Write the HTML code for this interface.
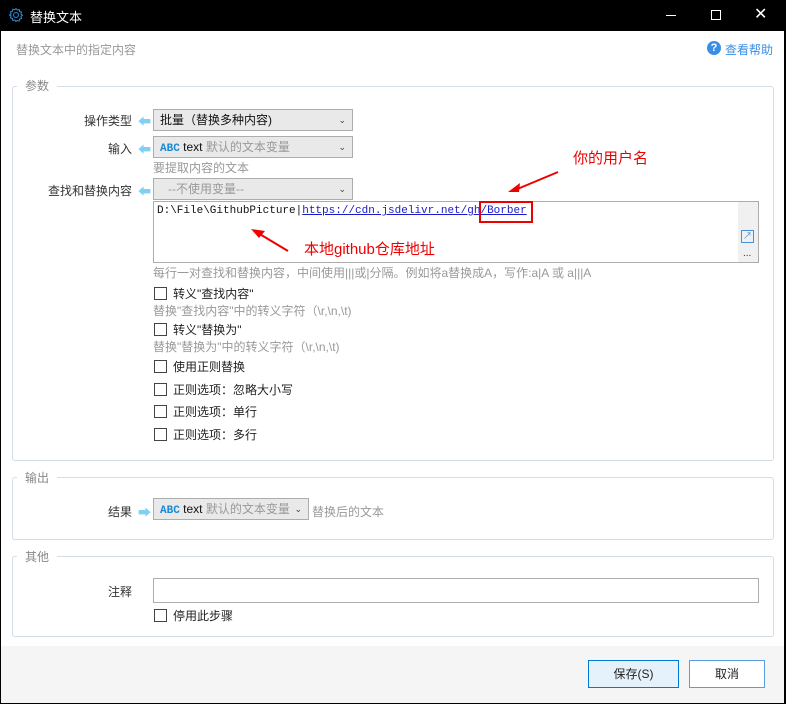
<!DOCTYPE html><html><head><meta charset="utf-8"><style>
*{box-sizing:border-box;margin:0;padding:0}
body{width:786px;height:704px;position:relative;overflow:hidden;background:#000;font-family:"Liberation Sans","Noto Sans CJK SC",sans-serif;font-size:12px;color:#333}
.a{position:absolute}
.win{position:absolute;left:1px;top:31px;width:783px;height:672px;background:#fff}
.foot{position:absolute;left:1px;top:646px;width:783px;height:57px;background:#f5f5f5}
.grp{position:absolute;border:1px solid #d5dde6;border-radius:3px}
.gt{position:absolute;background:#fff;padding:0 8px;color:#888;font-size:12px}
.lbl{position:absolute;text-align:right;width:120px;color:#333}
.arr{position:absolute;color:#7fd0f5;font-size:13px}
.sel{position:absolute;height:22px;background:#e9e9e9;border:1px solid #adadad;line-height:20px;padding-left:6px}
.sel .c{position:absolute;right:6px;top:0;font-size:9px;color:#444}
.abc{color:#1a8ad4;font-family:"Liberation Mono",monospace;font-weight:bold;font-size:11px}
.hint{position:absolute;color:#999}
.cb{position:absolute;width:13px;height:13px;border:1px solid #444;background:#fff}
.ct{position:absolute;color:#222}
.btn{position:absolute;height:28px;border:1px solid #5a9de0;background:#fff;text-align:center;line-height:26px;color:#222}
</style></head><body>
<svg class="a" style="left:8px;top:7px" width="16" height="16" viewBox="0 0 16 16"><circle cx="8" cy="8" r="2.5" fill="none" stroke="#2a8fd8"/><path d="M8 1.5l1.2 1.6 2-.6.3 2 2 .6-.6 2 1.6 1.2-1.6 1.2.6 2-2 .6-.3 2-2-.6L8 14.5l-1.2-1.6-2 .6-.3-2-2-.6.6-2L1.5 8l1.6-1.2-.6-2 2-.6.3-2 2 .6z" fill="none" stroke="#2a8fd8"/></svg>
<div class="a" style="left:30px;top:7px;color:#fff;font-size:13px">替换文本</div>
<div class="a" style="left:666px;top:15px;width:10px;height:1px;background:#fff"></div>
<div class="a" style="left:711px;top:10px;width:10px;height:10px;border:1px solid #fff"></div>
<div class="a" style="left:754px;top:4px;color:#fff;font-size:16px">✕</div>
<div class="win"></div><div class="foot"></div>
<div class="a" style="left:16px;top:41px;color:#999">替换文本中的指定内容</div>
<div class="a" style="left:707px;top:41px;width:14px;height:14px;border-radius:50%;background:#3a8ee6;color:#fff;font-weight:bold;font-size:11px;text-align:center;line-height:14px">?</div>
<div class="a" style="left:725px;top:41px;color:#3a8ee6">查看帮助</div>

<div class="grp" style="left:12px;top:86px;width:762px;height:375px"></div><div class="gt" style="left:17px;top:77px">参数</div>
<div class="lbl" style="left:12px;top:112px">操作类型</div><div class="arr" style="left:138px;top:111px">⬅</div>
<div class="sel" style="left:153px;top:109px;width:200px;color:#111">批量（替换多种内容)<span class="c">⌄</span></div>
<div class="lbl" style="left:12px;top:140px">输入</div><div class="arr" style="left:138px;top:139px">⬅</div>
<div class="sel" style="left:153px;top:136px;width:200px"><span class="abc">ABC</span> <span style="color:#111">text</span> <span style="color:#999">默认的文本变量</span><span class="c">⌄</span></div>
<div class="hint" style="left:153px;top:159px">要提取内容的文本</div>
<div class="lbl" style="left:12px;top:182px">查找和替换内容</div><div class="arr" style="left:138px;top:181px">⬅</div>
<div class="sel" style="left:153px;top:178px;width:200px;color:#999;padding-left:14px">--不使用变量--<span class="c">⌄</span></div>
<div class="a" style="left:153px;top:201px;width:606px;height:62px;border:1px solid #adadad;background:#fff"></div>
<div class="a" style="left:738px;top:202px;width:20px;height:60px;background:#f0f0f0"></div>
<div class="a" style="left:741px;top:230px;width:13px;height:13px;border:1px solid #4a90d9;color:#4a90d9;font-size:9px;line-height:11px;text-align:center">↗</div>
<div class="a" style="left:743px;top:248px;font-size:10px">...</div>
<div class="a" style="left:157px;top:205px;font-family:'Liberation Mono',monospace;font-size:11px;color:#111">D:\File\GithubPicture|<span style="color:#1a1acc;text-decoration:underline">https://cdn.jsdelivr.net/gh/Borber</span></div>
<div class="a" style="left:479px;top:201px;width:54px;height:22px;border:2px solid #e00"></div>
<svg class="a" style="left:240px;top:170px" width="330" height="90"><line x1="318" y1="2" x2="275" y2="20" stroke="#e00" stroke-width="2"/><path d="M268 22l12-9-1 9z" fill="#e00"/><line x1="48" y1="81" x2="18" y2="63" stroke="#e00" stroke-width="2"/><path d="M11 59l14 2-6 7z" fill="#e00"/></svg>
<div class="a" style="left:573px;top:147px;color:#e00;font-size:15px">你的用户名</div>
<div class="a" style="left:304px;top:238px;color:#e00;font-size:15px">本地github仓库地址</div>
<div class="hint" style="left:153px;top:264px">每行一对查找和替换内容，中间使用|||或|分隔。例如将a替换成A，写作:a|A 或 a|||A</div>
<div class="cb" style="left:154px;top:287px"></div><div class="ct" style="left:173px;top:285px">转义"查找内容"</div>
<div class="hint" style="left:153px;top:302px">替换"查找内容"中的转义字符（\r,\n,\t)</div>
<div class="cb" style="left:154px;top:323px"></div><div class="ct" style="left:173px;top:321px">转义"替换为"</div>
<div class="hint" style="left:153px;top:338px">替换"替换为"中的转义字符（\r,\n,\t)</div>
<div class="cb" style="left:154px;top:360px"></div><div class="ct" style="left:173px;top:358px">使用正则替换</div>
<div class="cb" style="left:154px;top:383px"></div><div class="ct" style="left:173px;top:381px">正则选项：忽略大小写</div>
<div class="cb" style="left:154px;top:405px"></div><div class="ct" style="left:173px;top:403px">正则选项：单行</div>
<div class="cb" style="left:154px;top:428px"></div><div class="ct" style="left:173px;top:426px">正则选项：多行</div>

<div class="grp" style="left:12px;top:477px;width:762px;height:63px"></div><div class="gt" style="left:17px;top:469px">输出</div>
<div class="lbl" style="left:12px;top:503px">结果</div><div class="arr" style="left:138px;top:502px">➡</div>
<div class="sel" style="left:153px;top:498px;width:156px"><span class="abc">ABC</span> <span style="color:#111">text</span> <span style="color:#999">默认的文本变量</span><span class="c">⌄</span></div>
<div class="hint" style="left:312px;top:503px">替换后的文本</div>

<div class="grp" style="left:12px;top:556px;width:762px;height:81px"></div><div class="gt" style="left:17px;top:548px">其他</div>
<div class="lbl" style="left:12px;top:583px">注释</div>
<div class="a" style="left:153px;top:578px;width:606px;height:25px;border:1px solid #adadad;background:#fff"></div>
<div class="cb" style="left:154px;top:609px"></div><div class="ct" style="left:173px;top:607px">停用此步骤</div>

<div class="btn" style="left:588px;top:660px;width:91px;background:#e5f1fb;border-color:#0078d7">保存(S)</div>
<div class="btn" style="left:689px;top:660px;width:76px">取消</div>
</body></html>
